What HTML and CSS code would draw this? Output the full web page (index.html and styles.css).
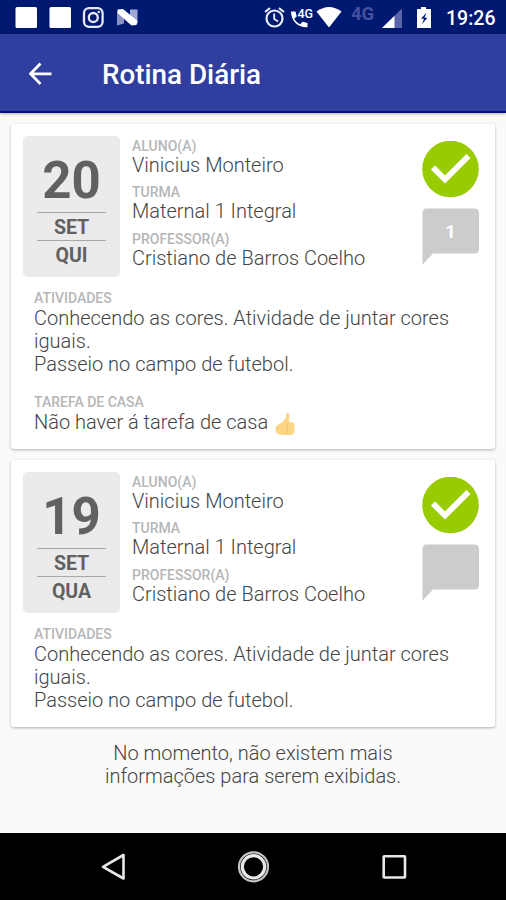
FILE: index.html
```html
<!DOCTYPE html>
<html lang="pt-BR">
<head>
    <meta charset="UTF-8">
    <meta name="viewport" content="width=device-width, initial-scale=1.0">
    <title>Rotina Diária</title>
    <link rel="stylesheet" href="styles.css">
</head>
<body>
    <div class="screen">
        <div class="status">
            <svg class="status-left" width="150" height="34" viewBox="0 0 150 34">
                <rect x="15.5" y="7" width="21.5" height="21" rx="1.5" fill="#fff"/>
                <rect x="49.5" y="7" width="21.5" height="21" rx="1.5" fill="#fff"/>
                <g fill="none" stroke="#e6e8f5" stroke-width="2.3">
                    <rect x="84" y="8.2" width="18.6" height="18.6" rx="5"/>
                    <circle cx="93.3" cy="17.5" r="4.5"/>
                </g>
                <circle cx="98.8" cy="12" r="1.3" fill="#e6e8f5"/>
                <path d="M117 11.5l7 4v8l-7 2z" fill="#8a91c4"/>
                <path d="M130 9.5h7.5v14l-7.5-6z" fill="#a3a9d2"/>
                <path d="M117.5 9.500L123 9l14.500 12-1 4-5 .5-14-12.500z" fill="#fff"/>
            </svg>
            <svg class="status-right" width="176" height="34" viewBox="0 0 176 34">
                <!-- alarm -->
                <g fill="none" stroke="#e9ebf7" stroke-width="2.2">
                    <circle cx="14.5" cy="18.5" r="8"/>
                    <path d="M14.200 13.500v5.500l4 2.500" stroke-width="1.8"/>
                    <path d="M5 12l5-4M24 12l-5-4"/>
                </g>
                <!-- call -->
                <path d="M31 11.500h4.500l1.200 5-2.500 2.200c1.500 2.700 3.300 4.300 6 5.600l2.300-2.500 5 1.200v4.300c-9.300.8-16.500-6.500-16.500-15.800z" fill="#fff"/>
                <text class="net" x="37.5" y="18">4G</text>
                <path d="M56.500 11.500q12.500-9 25 0L69 27.500z" fill="#fff"/>
                <text class="net-off" x="91" y="19.5">4G</text>
                <path d="M142 8.500V28h-20z" fill="#5a64a8"/>
                <path d="M134.500 15.700V28H122z" fill="#fff"/>
                <!-- battery -->
                <path d="M161 7h5v2h5v19h-14V9h4z" fill="#fff"/>
                <path d="M166.500 12.500l-5.500 6.200h3l-2 5.300 5.500-6.200h-3z" fill="#001a72"/>
            </svg>
            <span class="clock">19:26</span>
        </div>
        <div class="bar">
            <svg class="back" width="24" height="24" viewBox="0 0 24 24">
                <path d="M23.500 11.800H2.500M12.500 1.500L2.500 11.800 12.500 22" fill="none" stroke="#fff" stroke-width="2.7"/>
            </svg>
            <h1>Rotina Diária</h1>
        </div>

        <div class="list">
            <div class="card first">
                <div class="top">
                    <div class="date">
                        <div class="day">20</div>
                        <div class="month">SET</div>
                        <div class="week">QUI</div>
                    </div>
                    <div class="info">
                        <h2>ALUNO(A)</h2>
                        <p>Vinicius Monteiro</p>
                        <h2>TURMA</h2>
                        <p>Maternal 1 Integral</p>
                        <h2>PROFESSOR(A)</h2>
                        <p>Cristiano de Barros Coelho</p>
                    </div>
                    <svg class="marks" width="58" height="124" viewBox="0 0 58 124">
                        <circle cx="28.5" cy="28" r="28.3" fill="#99cc00"/>
                        <path d="M11 26.500L23 38.500 46.500 15" fill="none" stroke="#fff" stroke-width="5.8"/>
                        <path d="M4.500 67.500H52.500Q57 67.500 57 72V108Q57 112.500 52.500 112.500H11L.5 123.500V72Q.5 67.500 4.500 67.500z" fill="#ccc"/>
                        <text class="count" x="28.5" y="97">1</text>
                    </svg>
                </div>
                <div class="text">
                    <h2>ATIVIDADES</h2>
                    <p>Conhecendo as cores. Atividade de juntar cores iguais.<br>Passeio no campo de futebol.</p>
                    <h2 class="task">TAREFA DE CASA</h2>
                    <p>Não haver á tarefa de casa <svg class="thumb" width="20" height="24" viewBox="0 0 20 24">
                        <path d="M.5 15Q3 12 7 10.500L11 5.500V2Q11.500.3 13 .8 15 2 14.200 6L14 10Q19.500 9.500 19.500 12.500V19Q19.500 23 14 23H8Q2 23 .8 19.500z" fill="#fcd685"/>
                        <path d="M12 13V22" fill="none" stroke="#edbd68" stroke-width="1"/>
                    </svg></p>
                </div>
            </div>

            <div class="card second">
                <div class="top">
                    <div class="date">
                        <div class="day">19</div>
                        <div class="month">SET</div>
                        <div class="week">QUA</div>
                    </div>
                    <div class="info">
                        <h2>ALUNO(A)</h2>
                        <p>Vinicius Monteiro</p>
                        <h2>TURMA</h2>
                        <p>Maternal 1 Integral</p>
                        <h2>PROFESSOR(A)</h2>
                        <p>Cristiano de Barros Coelho</p>
                    </div>
                    <svg class="marks" width="58" height="124" viewBox="0 0 58 124">
                        <circle cx="28.5" cy="28" r="28.3" fill="#99cc00"/>
                        <path d="M11 26.500L23 38.500 46.500 15" fill="none" stroke="#fff" stroke-width="5.8"/>
                        <path d="M4.500 67.500H52.500Q57 67.500 57 72V108Q57 112.500 52.500 112.500H11L.5 123.500V72Q.5 67.500 4.500 67.500z" fill="#ccc"/>
                    </svg>
                </div>
                <div class="text">
                    <h2>ATIVIDADES</h2>
                    <p>Conhecendo as cores. Atividade de juntar cores iguais.<br>Passeio no campo de futebol.</p>
                </div>
            </div>

            <p class="end">No momento, não existem mais<br>informações para serem exibidas.</p>
        </div>

        <div class="nav">
            <svg width="506" height="67" viewBox="0 0 506 67">
                <g fill="none" stroke="#e8e8e8" stroke-width="2.6">
                    <path d="M123.500 22v23.500L103 33.800z" stroke-linejoin="round"/>
                    <circle cx="253.5" cy="33.8" r="11.2" stroke-width="3.2"/>
                    <circle cx="253.5" cy="33.8" r="14.5" stroke="#c4c4c4" stroke-width="2.2"/>
                    <rect x="383.700" y="23.200" width="21.3" height="21.3" rx=".5"/>
                </g>
            </svg>
        </div>
    </div>
</body>
</html>
```

FILE: styles.css
```css
* {
    margin: 0;
    padding: 0;
    box-sizing: border-box;
}

body {
    font-family: Roboto, "Liberation Sans", sans-serif;
    background: #fafafa;
}

.screen {
    width: 506px;
    height: 900px;
    display: flex;
    flex-direction: column;
    overflow: hidden;
}

.status {
    height: 34px;
    flex: none;
    display: flex;
    background: #001970;
}

.status-right {
    margin-left: 110px;
}

.net {
    font-size: 12.5px;
    font-weight: 500;
    fill: #fff;
}

.net-off {
    font-size: 18.5px;
    font-weight: 700;
    fill: #4650a0;
}

.clock {
    margin-left: 10px;
    line-height: 37px;
    font-size: 19.5px;
    font-weight: 500;
    color: #fff;
}

.bar {
    height: 79px;
    flex: none;
    display: flex;
    align-items: center;
    padding: 3px 0 0 28px;
    background: #303f9f;
    border-bottom: 2px solid #000e84;
    box-shadow: 0 1px 3px rgba(0, 0, 0, 0.3);
}

.bar h1 {
    margin: 1px 0 0 50px;
    font-size: 27.8px;
    font-weight: 500;
    color: #fff;
}

.list {
    flex: 1;
    padding: 11px 11px 0;
}

.card {
    padding: 12px 12px 0;
    background: #fff;
    border-radius: 3px;
    box-shadow: 0 1px 3px rgba(0, 0, 0, 0.3);
}

.first {
    height: 325px;
    margin-bottom: 11px;
}

.second {
    height: 267px;
}

.top {
    display: flex;
    height: 141px;
}

.date {
    width: 97px;
    height: 141px;
    padding: 16px 14px 0;
    background: #ebebeb;
    border-radius: 5px;
    text-align: center;
    font-weight: 700;
    color: #616161;
}

.day {
    height: 60px;
    line-height: 58px;
    font-size: 51px;
}

.month,
.week {
    height: 28px;
    line-height: 30px;
    font-size: 19.5px;
    border-top: 1px solid #a8a8a8;
}

.info {
    flex: 1;
    padding: 2px 0 0 12px;
}

h2 {
    height: 16px;
    line-height: 16px;
    font-size: 14px;
    font-weight: 500;
    color: #b6b6b6;
}

p {
    line-height: 23px;
    font-size: 20px;
    font-weight: 300;
    color: #444;
}

.info p {
    margin-bottom: 7.3px;
}

.marks {
    margin: 5px 3px 0 0;
}

.count {
    font-size: 19px;
    font-weight: 700;
    fill: #fff;
    text-anchor: middle;
}

.text {
    padding: 13px 20px 0 11px;
}

.text p {
    padding-top: 1px;
}

.task {
    margin-top: 18px;
}

.thumb {
    vertical-align: -3px;
    margin: -4px 0 -4px 2px;
}

.end {
    margin-top: 15px;
    text-align: center;
}

.nav {
    height: 67px;
    flex: none;
    background: #000;
}

.nav svg {
    display: block;
}
```
